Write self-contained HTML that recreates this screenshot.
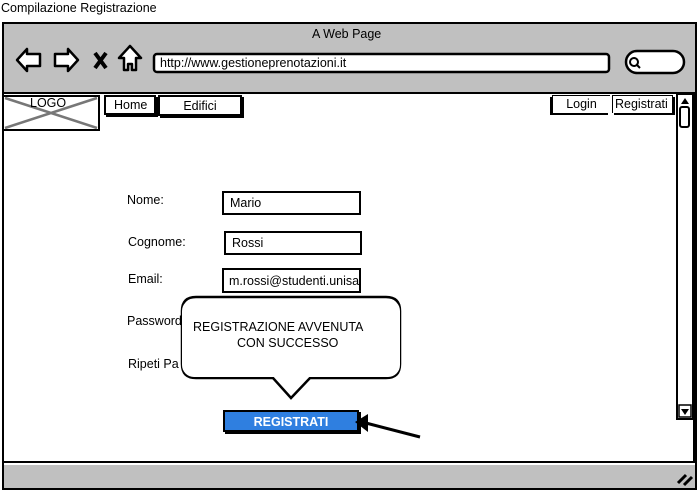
<!DOCTYPE html>
<html><head><meta charset="utf-8"><style>
body{margin:0;width:698px;height:491px;background:#fff;position:relative;overflow:hidden;font-family:"Liberation Sans",sans-serif;font-size:12.5px;color:#000}
.a{position:absolute}
.box{position:absolute;border:2px solid #000;background:#fff;box-sizing:border-box}
</style></head><body>
<div class="a" style="left:1px;top:1px;font-size:12.5px">Compilazione Registrazione</div>
<div class="a" style="left:2px;top:22px;width:695px;height:468px;border:2px solid #000;box-sizing:border-box;background:#c0c0c0"></div>
<div class="a" style="left:4px;top:92px;width:691px;height:371px;background:#fff;border-top:2px solid #000"></div>
<div class="a" style="left:693px;top:92px;height:370px;border-left:2px solid #000"></div>
<div class="a" style="left:2px;top:461px;width:695px;border-top:2px solid #000"></div>
<div class="a" style="left:312px;top:27px;font-size:12.5px">A Web Page</div>
<svg class="a" style="left:0;top:0" width="698" height="491">
<g fill="#fff" stroke="#000" stroke-width="2.5" stroke-linejoin="round">
<path d="M17 60 L27 49 L27 54 L40 54 L40 66 L27 66 L27 71 Z"/>
<path d="M78 60 L68 49 L68 54 L55 54 L55 66 L68 66 L68 71 Z"/>
<path d="M130 46 L141 58 L136 58 L136 70 L132 70 L132 64 L128 64 L128 70 L124 70 L124 58 L119 58 Z"/>
<rect x="154" y="54" width="455" height="18" rx="3"/>
<rect x="626" y="51" width="58" height="22" rx="11"/>
</g>
<path d="M95 53 L106 68 M106 53 L95 68" stroke="#000" stroke-width="4"/>
<circle cx="634" cy="62" r="4" fill="none" stroke="#000" stroke-width="2"/>
<line x1="637" y1="65" x2="640" y2="68" stroke="#000" stroke-width="2"/>
<text x="160" y="67" font-family="Liberation Sans" font-size="12.5">http://www.gestioneprenotazioni.it</text>
<rect x="677" y="94" width="16" height="325" fill="#fff" stroke="#000" stroke-width="2"/>
<path d="M681 104 L685 98 L689 104 Z"/>
<rect x="680" y="107" width="9" height="20" rx="2" fill="#fff" stroke="#000" stroke-width="2"/>
<rect x="679" y="405" width="12" height="12" fill="#fff" stroke="#000" stroke-width="1.5"/>
<path d="M681 409 L689 409 L685 415 Z"/>
<line x1="677" y1="94" x2="677" y2="419" stroke="#000" stroke-width="2"/>
<path d="M678 483 L686 475 M684 485 L692 477" stroke="#000" stroke-width="3"/>
<rect x="3" y="96" width="96" height="34" fill="#fff" stroke="#000" stroke-width="2"/>
<path d="M5 98 L97 128 M5 128 L97 98" stroke="#777" stroke-width="2.5"/>
<path d="M362 422 L420 437" stroke="#000" stroke-width="3"/>
<path d="M355 422 L368 415 L368 429 Z" fill="#000"/>
<path d="M196 297 L386 297 Q400 297 400 311 L400 364 Q400 378 386 378 L310 378 L291 398 L273 378 L196 378 Q182 378 182 364 L182 311 Q182 297 196 297 Z" fill="#fff" stroke="#000" stroke-width="2.5"/>
</svg>
<div class="a" style="left:30px;top:96px">LOGO</div>
<div class="box" style="left:104px;top:95px;width:52px;height:20px;box-shadow:2px 2px 0 #000;padding:1px 0 0 8px">Home</div>
<div class="box" style="left:158px;top:95px;width:84px;height:21px;box-shadow:2px 2px 0 #000;text-align:center;padding-top:2px">Edifici</div>
<div class="box" style="left:552px;top:95px;width:58px;height:18px;box-shadow:-2px 2px 0 #000;text-align:center;padding-top:1px;border-width:1px 0 0 1px">Login</div>
<div class="box" style="left:612px;top:95px;width:61px;height:18px;box-shadow:2px 2px 0 #000;padding:1px 0 0 2px;border-width:1px 1px 0 1px;white-space:nowrap">Registrati</div>
<div class="a" style="left:127px;top:193px">Nome:</div>
<div class="a" style="left:128px;top:235px">Cognome:</div>
<div class="a" style="left:128px;top:272px">Email:</div>
<div class="a" style="left:127px;top:314px">Password</div>
<div class="a" style="left:128px;top:357px">Ripeti Pa</div>
<div class="box" style="left:222px;top:191px;width:139px;height:24px;padding:3px 0 0 6px">Mario</div>
<div class="box" style="left:224px;top:231px;width:138px;height:24px;padding:3px 0 0 6px">Rossi</div>
<div class="box" style="left:222px;top:268px;width:139px;height:25px;padding:4px 0 0 5px;overflow:hidden;white-space:nowrap">m.rossi@studenti.unisa</div>
<div class="a" style="left:182px;top:299px;width:218px;height:78px;background:#fff;border-radius:12px"></div>
<div class="a" style="left:193px;top:319px;line-height:16px">REGISTRAZIONE AVVENUTA<br><span style="padding-left:44px">CON SUCCESSO</span></div>
<div class="a" style="left:223px;top:410px;width:136px;height:22px;background:#2f7fe0;border:2px solid #000;box-sizing:border-box;box-shadow:2px 2px 0 #000;color:#fff;font-weight:bold;text-align:center;padding-top:3px">REGISTRATI</div>
<svg class="a" style="left:340px;top:410px" width="30" height="30"><path d="M15 12 L28 4 L28 22 Z" fill="#000"/></svg>
</body></html>
